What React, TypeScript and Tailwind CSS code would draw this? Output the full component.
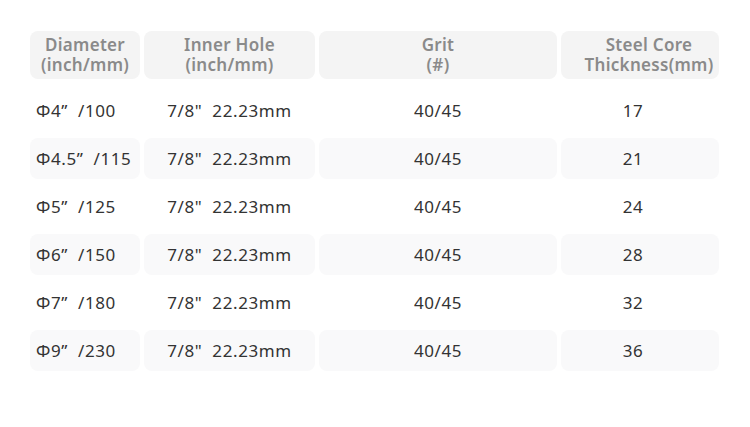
import React from 'react';

const rows = [
    ['Φ4”  /100', '17'],
    ['Φ4.5”  /115', '21'],
    ['Φ5”  /125', '24'],
    ['Φ6”  /150', '28'],
    ['Φ7”  /180', '32'],
    ['Φ9”  /230', '36'],
];

export default function App() {
    return (
        <div className="w-[750px] h-[427px] bg-white pl-[30px] pt-[31px]" style={{ fontFamily: '"Noto Sans", "Open Sans", sans-serif' }}>
            {/* Header */}
            <div className="grid grid-cols-[110px_171px_238px_158px] gap-x-[4px] h-[48px] text-[17px] leading-[20px] font-semibold tracking-[0.3px] text-[#8a8a8a]">
                <div className="bg-[#f4f4f4] rounded-[8px] flex flex-col items-center justify-center">
                    <span>Diameter</span>
                    <span>(inch/mm)</span>
                </div>
                <div className="bg-[#f4f4f4] rounded-[8px] flex flex-col items-center justify-center">
                    <span>Inner Hole</span>
                    <span>(inch/mm)</span>
                </div>
                <div className="bg-[#f4f4f4] rounded-[8px] flex flex-col items-center justify-center">
                    <span>Grit</span>
                    <span>(#)</span>
                </div>
                <div className="bg-[#f4f4f4] rounded-[8px] flex flex-col items-center justify-center pl-[18px] whitespace-nowrap">
                    <span>Steel Core</span>
                    <span>Thickness(mm)</span>
                </div>
            </div>

            {/* Body */}
            <div className="mt-[11px] flex flex-col gap-[7px] text-[17px] tracking-[0.6px] text-[#333]">
                {rows.map(([dia, thick], i) => {
                    const cell = i % 2 === 1 ? 'bg-[#f9f9fa] rounded-[8px]' : '';
                    return (
                        <div key={dia} className="grid grid-cols-[110px_171px_238px_158px] gap-x-[4px] h-[41px]">
                            <div className={`${cell} flex items-center pl-[6px] whitespace-pre`}>{dia}</div>
                            <div className={`${cell} flex items-center justify-center whitespace-pre`}>{'7/8"  22.23mm'}</div>
                            <div className={`${cell} flex items-center justify-center`}>40/45</div>
                            <div className={`${cell} flex items-center justify-center pr-[14px]`}>{thick}</div>
                        </div>
                    );
                })}
            </div>
        </div>
    );
}
